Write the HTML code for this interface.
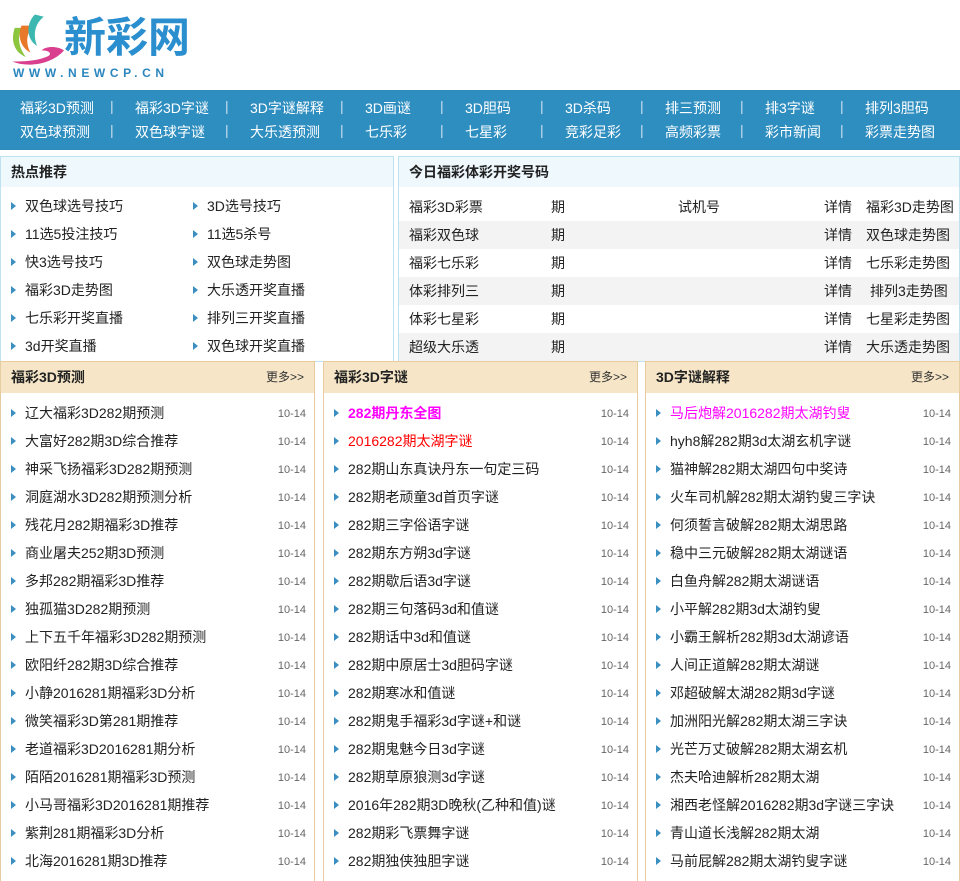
<!DOCTYPE html>
<html><head><meta charset="utf-8"><style>
*{margin:0;padding:0;box-sizing:border-box}
body{width:960px;height:873px;overflow:hidden;background:#fff;font-family:"Liberation Sans","Noto Sans CJK SC",sans-serif;font-size:14px;color:#222;position:relative}
.abs{position:absolute}
.nav{left:0;top:90px;width:960px;height:60px;background:#2e8ec0}
.nav span{position:absolute;color:#fff;font-size:14px;white-space:nowrap}
.sep{color:#cde!important}
.box{position:absolute;border:1px solid #bfe2f2}
.bh{height:30px;background:#eef8fd;font-weight:bold;font-size:14px;line-height:30px;padding-left:10px;color:#222}
.tri{display:inline-block;width:0;height:0;border-left:5px solid #3b8fc0;border-top:4px solid transparent;border-bottom:4px solid transparent;margin-right:9px;vertical-align:1px}
.hot div{position:absolute;white-space:nowrap}
.tr{position:absolute;left:0;width:560px;height:28px;line-height:28px}
.tr span{position:absolute;white-space:nowrap}
.col{position:absolute;top:361px;height:520px;border:1px solid #e6cc9f;border-bottom:none}
.ch{height:31px;background:#f6e6c7;line-height:31px;padding-left:10px;font-weight:bold;position:relative}
.ch i{position:absolute;right:10px;top:0;font-style:normal;font-weight:normal;font-size:12px;color:#333}
.li{position:absolute;left:10px;right:8px;height:28px;line-height:28px;white-space:nowrap}
.li em{position:absolute;right:0;font-style:normal;font-weight:normal;font-size:11px;color:#666;top:1px}
</style></head><body>
<svg class="abs" style="left:8px;top:10px" width="56" height="56" viewBox="0 0 50 50">
<path d="M6 16 C2 28 6 38 16 42 C10 34 8 26 12 16Z" fill="#8cc63f"/>
<path d="M12 14 C8 24 12 34 20 38 C16 30 16 22 22 14Z" fill="#e8792b"/>
<path d="M24 4 C16 12 16 26 26 32 C22 22 24 12 32 6Z" fill="#3db8b0"/>
<path d="M4 46 C18 52 40 48 50 36 C44 32 34 32 30 36 C38 36 40 40 34 42 C24 46 12 46 4 46Z" fill="#d93f8e"/>
</svg>
<div class="abs" style="left:64px;top:14px;font-size:42px;font-weight:bold;color:#2b8fcf;line-height:48px">新彩网</div>
<div class="abs" style="left:13px;top:66px;font-size:12px;font-weight:bold;color:#2b86bf;letter-spacing:4.6px">WWW.NEWCP.CN</div>
<div class="abs nav">
<span style="left:20px;top:8px">福彩3D预测</span><span style="left:20px;top:32px">双色球预测</span>
<span class="sep" style="left:110px;top:8px">|</span><span class="sep" style="left:110px;top:32px">|</span>
<span style="left:135px;top:8px">福彩3D字谜</span><span style="left:135px;top:32px">双色球字谜</span>
<span class="sep" style="left:225px;top:8px">|</span><span class="sep" style="left:225px;top:32px">|</span>
<span style="left:250px;top:8px">3D字谜解释</span><span style="left:250px;top:32px">大乐透预测</span>
<span class="sep" style="left:340px;top:8px">|</span><span class="sep" style="left:340px;top:32px">|</span>
<span style="left:365px;top:8px">3D画谜</span><span style="left:365px;top:32px">七乐彩</span>
<span class="sep" style="left:440px;top:8px">|</span><span class="sep" style="left:440px;top:32px">|</span>
<span style="left:465px;top:8px">3D胆码</span><span style="left:465px;top:32px">七星彩</span>
<span class="sep" style="left:540px;top:8px">|</span><span class="sep" style="left:540px;top:32px">|</span>
<span style="left:565px;top:8px">3D杀码</span><span style="left:565px;top:32px">竞彩足彩</span>
<span class="sep" style="left:640px;top:8px">|</span><span class="sep" style="left:640px;top:32px">|</span>
<span style="left:665px;top:8px">排三预测</span><span style="left:665px;top:32px">高频彩票</span>
<span class="sep" style="left:740px;top:8px">|</span><span class="sep" style="left:740px;top:32px">|</span>
<span style="left:765px;top:8px">排3字谜</span><span style="left:765px;top:32px">彩市新闻</span>
<span class="sep" style="left:840px;top:8px">|</span><span class="sep" style="left:840px;top:32px">|</span>
<span style="left:865px;top:8px">排列3胆码</span><span style="left:865px;top:32px">彩票走势图</span>
</div>

<div class="box hot" style="left:0;top:156px;width:394px;height:206px">
<div class="bh" style="position:static">热点推荐</div>
<div style="left:10px;top:39px"><b class="tri"></b>双色球选号技巧</div><div style="left:192px;top:39px"><b class="tri"></b>3D选号技巧</div>
<div style="left:10px;top:67px"><b class="tri"></b>11选5投注技巧</div><div style="left:192px;top:67px"><b class="tri"></b>11选5杀号</div>
<div style="left:10px;top:95px"><b class="tri"></b>快3选号技巧</div><div style="left:192px;top:95px"><b class="tri"></b>双色球走势图</div>
<div style="left:10px;top:123px"><b class="tri"></b>福彩3D走势图</div><div style="left:192px;top:123px"><b class="tri"></b>大乐透开奖直播</div>
<div style="left:10px;top:151px"><b class="tri"></b>七乐彩开奖直播</div><div style="left:192px;top:151px"><b class="tri"></b>排列三开奖直播</div>
<div style="left:10px;top:179px"><b class="tri"></b>3d开奖直播</div><div style="left:192px;top:179px"><b class="tri"></b>双色球开奖直播</div>
</div>

<div class="box" style="left:398px;top:156px;width:562px;height:206px">
<div class="bh">今日福彩体彩开奖号码</div>
<div class="tr" style="top:36px"><span style="left:10px">福彩3D彩票</span><span style="left:152px">期</span><span style="left:279px">试机号</span><span style="left:425px">详情</span><span style="left:467px">福彩3D走势图</span></div>
<div class="tr" style="top:64px;background:#f3f3f3"><span style="left:10px">福彩双色球</span><span style="left:152px">期</span><span style="left:425px">详情</span><span style="left:467px">双色球走势图</span></div>
<div class="tr" style="top:92px"><span style="left:10px">福彩七乐彩</span><span style="left:152px">期</span><span style="left:425px">详情</span><span style="left:467px">七乐彩走势图</span></div>
<div class="tr" style="top:120px;background:#f3f3f3"><span style="left:10px">体彩排列三</span><span style="left:152px">期</span><span style="left:425px">详情</span><span style="left:471px">排列3走势图</span></div>
<div class="tr" style="top:148px"><span style="left:10px">体彩七星彩</span><span style="left:152px">期</span><span style="left:425px">详情</span><span style="left:467px">七星彩走势图</span></div>
<div class="tr" style="top:176px;background:#f3f3f3"><span style="left:10px">超级大乐透</span><span style="left:152px">期</span><span style="left:425px">详情</span><span style="left:467px">大乐透走势图</span></div>
</div>

<div class="col" style="left:0;width:315px">
<div class="ch">福彩3D预测<i>更多&gt;&gt;</i></div>
<div class="li" style="top:37px"><b class="tri"></b>辽大福彩3D282期预测<em>10-14</em></div>
<div class="li" style="top:65px"><b class="tri"></b>大富好282期3D综合推荐<em>10-14</em></div>
<div class="li" style="top:93px"><b class="tri"></b>神采飞扬福彩3D282期预测<em>10-14</em></div>
<div class="li" style="top:121px"><b class="tri"></b>洞庭湖水3D282期预测分析<em>10-14</em></div>
<div class="li" style="top:149px"><b class="tri"></b>残花月282期福彩3D推荐<em>10-14</em></div>
<div class="li" style="top:177px"><b class="tri"></b>商业屠夫252期3D预测<em>10-14</em></div>
<div class="li" style="top:205px"><b class="tri"></b>多邦282期福彩3D推荐<em>10-14</em></div>
<div class="li" style="top:233px"><b class="tri"></b>独孤猫3D282期预测<em>10-14</em></div>
<div class="li" style="top:261px"><b class="tri"></b>上下五千年福彩3D282期预测<em>10-14</em></div>
<div class="li" style="top:289px"><b class="tri"></b>欧阳纤282期3D综合推荐<em>10-14</em></div>
<div class="li" style="top:317px"><b class="tri"></b>小静2016281期福彩3D分析<em>10-14</em></div>
<div class="li" style="top:345px"><b class="tri"></b>微笑福彩3D第281期推荐<em>10-14</em></div>
<div class="li" style="top:373px"><b class="tri"></b>老道福彩3D2016281期分析<em>10-14</em></div>
<div class="li" style="top:401px"><b class="tri"></b>陌陌2016281期福彩3D预测<em>10-14</em></div>
<div class="li" style="top:429px"><b class="tri"></b>小马哥福彩3D2016281期推荐<em>10-14</em></div>
<div class="li" style="top:457px"><b class="tri"></b>紫荆281期福彩3D分析<em>10-14</em></div>
<div class="li" style="top:485px"><b class="tri"></b>北海2016281期3D推荐<em>10-14</em></div>
</div>

<div class="col" style="left:323px;width:315px">
<div class="ch">福彩3D字谜<i>更多&gt;&gt;</i></div>
<div class="li" style="top:37px;color:#f0f;font-weight:bold"><b class="tri"></b>282期丹东全图<em>10-14</em></div>
<div class="li" style="top:65px;color:#f00"><b class="tri"></b>2016282期太湖字谜<em>10-14</em></div>
<div class="li" style="top:93px"><b class="tri"></b>282期山东真诀丹东一句定三码<em>10-14</em></div>
<div class="li" style="top:121px"><b class="tri"></b>282期老顽童3d首页字谜<em>10-14</em></div>
<div class="li" style="top:149px"><b class="tri"></b>282期三字俗语字谜<em>10-14</em></div>
<div class="li" style="top:177px"><b class="tri"></b>282期东方朔3d字谜<em>10-14</em></div>
<div class="li" style="top:205px"><b class="tri"></b>282期歇后语3d字谜<em>10-14</em></div>
<div class="li" style="top:233px"><b class="tri"></b>282期三句落码3d和值谜<em>10-14</em></div>
<div class="li" style="top:261px"><b class="tri"></b>282期话中3d和值谜<em>10-14</em></div>
<div class="li" style="top:289px"><b class="tri"></b>282期中原居士3d胆码字谜<em>10-14</em></div>
<div class="li" style="top:317px"><b class="tri"></b>282期寒冰和值谜<em>10-14</em></div>
<div class="li" style="top:345px"><b class="tri"></b>282期鬼手福彩3d字谜+和谜<em>10-14</em></div>
<div class="li" style="top:373px"><b class="tri"></b>282期鬼魅今日3d字谜<em>10-14</em></div>
<div class="li" style="top:401px"><b class="tri"></b>282期草原狼测3d字谜<em>10-14</em></div>
<div class="li" style="top:429px"><b class="tri"></b>2016年282期3D晚秋(乙种和值)谜<em>10-14</em></div>
<div class="li" style="top:457px"><b class="tri"></b>282期彩飞票舞字谜<em>10-14</em></div>
<div class="li" style="top:485px"><b class="tri"></b>282期独侠独胆字谜<em>10-14</em></div>
</div>

<div class="col" style="left:645px;width:315px">
<div class="ch">3D字谜解释<i>更多&gt;&gt;</i></div>
<div class="li" style="top:37px;color:#f0f"><b class="tri"></b>马后炮解2016282期太湖钓叟<em>10-14</em></div>
<div class="li" style="top:65px"><b class="tri"></b>hyh8解282期3d太湖玄机字谜<em>10-14</em></div>
<div class="li" style="top:93px"><b class="tri"></b>猫神解282期太湖四句中奖诗<em>10-14</em></div>
<div class="li" style="top:121px"><b class="tri"></b>火车司机解282期太湖钓叟三字诀<em>10-14</em></div>
<div class="li" style="top:149px"><b class="tri"></b>何须誓言破解282期太湖思路<em>10-14</em></div>
<div class="li" style="top:177px"><b class="tri"></b>稳中三元破解282期太湖谜语<em>10-14</em></div>
<div class="li" style="top:205px"><b class="tri"></b>白鱼舟解282期太湖谜语<em>10-14</em></div>
<div class="li" style="top:233px"><b class="tri"></b>小平解282期3d太湖钓叟<em>10-14</em></div>
<div class="li" style="top:261px"><b class="tri"></b>小霸王解析282期3d太湖谚语<em>10-14</em></div>
<div class="li" style="top:289px"><b class="tri"></b>人间正道解282期太湖谜<em>10-14</em></div>
<div class="li" style="top:317px"><b class="tri"></b>邓超破解太湖282期3d字谜<em>10-14</em></div>
<div class="li" style="top:345px"><b class="tri"></b>加洲阳光解282期太湖三字诀<em>10-14</em></div>
<div class="li" style="top:373px"><b class="tri"></b>光芒万丈破解282期太湖玄机<em>10-14</em></div>
<div class="li" style="top:401px"><b class="tri"></b>杰夫哈迪解析282期太湖<em>10-14</em></div>
<div class="li" style="top:429px"><b class="tri"></b>湘西老怪解2016282期3d字谜三字诀<em>10-14</em></div>
<div class="li" style="top:457px"><b class="tri"></b>青山道长浅解282期太湖<em>10-14</em></div>
<div class="li" style="top:485px"><b class="tri"></b>马前屁解282期太湖钓叟字谜<em>10-14</em></div>
</div>
</body></html>
